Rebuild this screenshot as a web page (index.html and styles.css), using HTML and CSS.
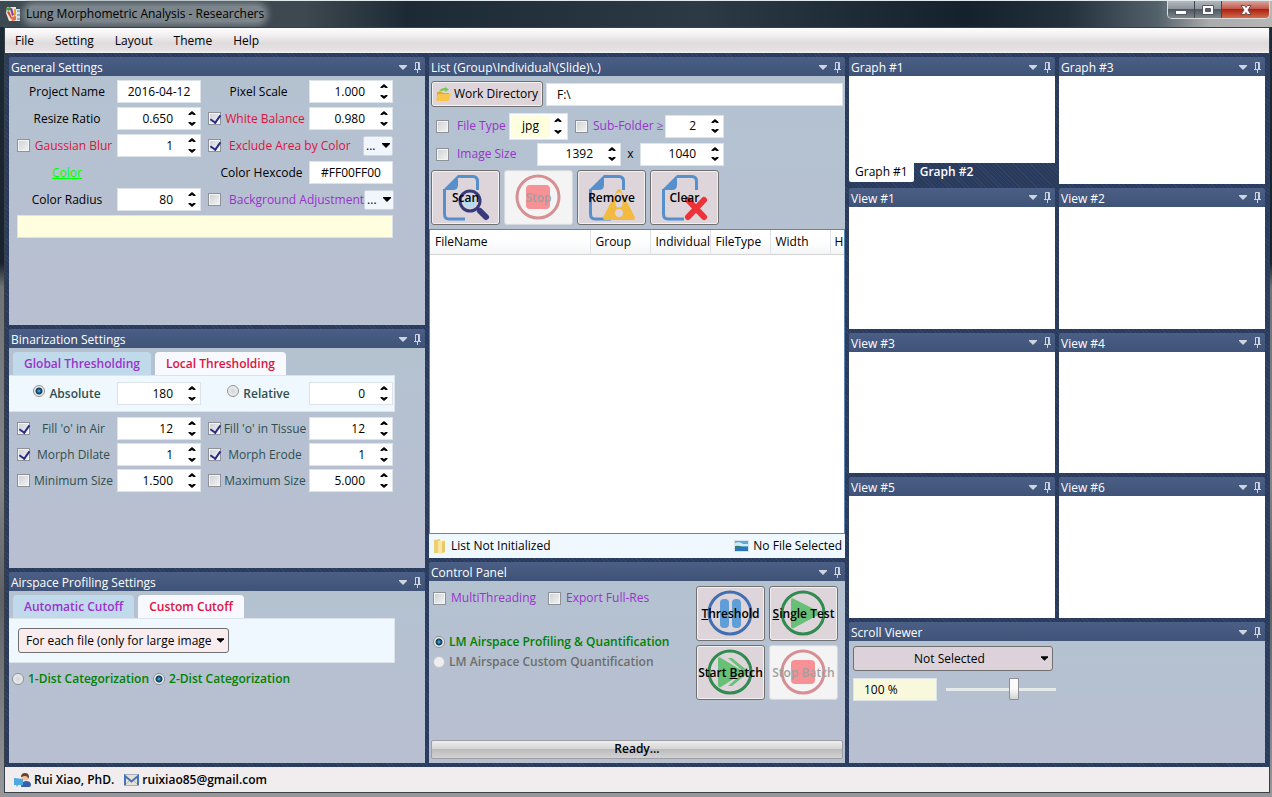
FILE: index.html
```
<!DOCTYPE html>
<html lang="en">
<head>
  <meta charset="UTF-8">
  <meta name="viewport" content="width=device-width, initial-scale=1.0">
  <title>Lung Morphometric Analysis - Researchers</title>
  <link rel="stylesheet" href="styles.css">
</head>
<body>
  <!-- shared icons -->
  <svg class="defs" width="0" height="0" aria-hidden="true">
    <symbol id="i-down" viewBox="0 0 8 5"><path d="M0 0h8v1L4 5 0 1z"/></symbol>
    <symbol id="i-up" viewBox="0 0 8 4"><path d="M4 0l3.500 3v1H5.500L4 3 2.500 4h-2V3z"/></symbol>
    <symbol id="i-dn" viewBox="0 0 8 4"><path d="M4 4L.5 1V0h2L4 1 5.500 0h2v1z"/></symbol>
    <symbol id="i-pin" viewBox="0 0 7 11"><path d="M1.500 7V.5h4V7M0 7.500h7M3.500 7.500V11M4.500 1v6" fill="none" stroke="currentColor"/></symbol>
    <symbol id="i-doc" viewBox="0 0 69 55">
      <path d="M27 6.500h15q4.500 0 4.500 5V20M13.500 19v25q0 5 4.500 5h16" fill="none" stroke="#5590cc" stroke-width="3"/>
      <path d="M27 5v10q0 5-5 5H12z" fill="#5590cc"/>
    </symbol>
    <symbol id="i-stop" viewBox="0 0 69 55">
      <circle cx="34" cy="27" r="21" fill="none" stroke="#d69093" stroke-width="3"/>
      <rect x="22" y="15" width="24" height="24" rx="4" fill="#f69196"/>
    </symbol>
  </svg>

  <header class="titlebar">
    <svg class="app-icon" width="15" height="14" viewBox="0 0 15 14">
      <path d="M1 0h9v2h4v12H3L0 6z" fill="#e9e6e4"/>
      <path d="M0 1l4-1 2 2-4 2z" fill="#4b9b3a"/>
      <path d="M4 2l2-1 2 7-2 1z" fill="#8d3ba5"/>
      <path d="M1 5l2-1 3 7-1 1z" fill="#d8432c"/>
      <path d="M8 2l2 0 0 6-2 1z" fill="#e5a323"/>
      <path d="M11 3h3v2h-3zM11 7h3v2h-3zM11 11h3v2h-3z" fill="#7bbcd6"/>
      <path d="M5 10l5-1 0 4-4 1z" fill="#e8703a"/>
    </svg>
    <h1>Lung Morphometric Analysis - Researchers</h1>
    <div class="window-buttons">
      <button aria-label="Minimize"><svg width="14" height="12"><rect x="1.500" y="6.500" width="11" height="4" fill="#fff" stroke="#555b66"/></svg></button>
      <button aria-label="Maximize"><svg width="14" height="12"><path d="M1.500 1.500h11v9h-11zM4.500 4.500v3h5v-3z" fill="#fff" fill-rule="evenodd" stroke="#555b66"/></svg></button>
      <button class="close" aria-label="Close"><svg width="14" height="12" viewBox="0 0 14 12"><path d="M2 1.500h3.500L7 3.500l1.500-2H12L9 6l3 4.500H8.500L7 8.500l-1.500 2H2L5 6z" fill="#fff" stroke="#6b4a4e"/></svg></button>
    </div>
  </header>

  <div class="window">
    <nav class="menu">
      <a href="#">File</a>
      <a href="#">Setting</a>
      <a href="#">Layout</a>
      <a href="#">Theme</a>
      <a href="#">Help</a>
    </nav>

    <main class="dock">
      <div class="column left">
        <section class="panel">
          <header class="panel-title"><h2>General Settings</h2><svg class="caret"><use href="#i-down"/></svg><svg class="pin"><use href="#i-pin"/></svg></header>
          <div class="panel-body">
            <div class="form">
              <label class="wide" for="project">Project Name</label>
              <input class="box center" id="project" type="text" value="2016-04-12">
              <label class="wide right" for="scale">Pixel Scale</label>
              <div class="spin"><input id="scale" type="text" value="1.000"><button aria-label="Up"><svg><use href="#i-up"/></svg></button><button aria-label="Down"><svg><use href="#i-dn"/></svg></button></div>

              <label class="wide" for="ratio">Resize Ratio</label>
              <div class="spin"><input id="ratio" type="text" value="0.650"><button aria-label="Up"><svg><use href="#i-up"/></svg></button><button aria-label="Down"><svg><use href="#i-dn"/></svg></button></div>
              <input class="right" type="checkbox" id="white" checked>
              <label class="red" for="white">White Balance</label>
              <div class="spin"><input aria-label="White Balance" type="text" value="0.980"><button aria-label="Up"><svg><use href="#i-up"/></svg></button><button aria-label="Down"><svg><use href="#i-dn"/></svg></button></div>

              <input type="checkbox" id="blur">
              <label class="red" for="blur">Gaussian Blur</label>
              <div class="spin"><input aria-label="Gaussian Blur" type="text" value="1"><button aria-label="Up"><svg><use href="#i-up"/></svg></button><button aria-label="Down"><svg><use href="#i-dn"/></svg></button></div>
              <input class="right" type="checkbox" id="exclude" checked>
              <div class="with-more"><label class="red" for="exclude">Exclude Area by Color</label><button class="more"><span>...</span><svg><use href="#i-down"/></svg></button></div>

              <a class="wide color-link" href="#">Color</a>
              <label class="wide right hex" for="hex">Color Hexcode</label>
              <input class="box center" id="hex" type="text" value="#FF00FF00">

              <label class="wide" for="radius">Color Radius</label>
              <div class="spin"><input id="radius" type="text" value="80"><button aria-label="Up"><svg><use href="#i-up"/></svg></button><button aria-label="Down"><svg><use href="#i-dn"/></svg></button></div>
              <input class="right" type="checkbox" id="backadj">
              <div class="with-more"><label class="purple" for="backadj">Background Adjustment</label><button class="more"><span>...</span><svg><use href="#i-down"/></svg></button></div>

              <input class="box note" type="text" aria-label="Note">
            </div>
          </div>
        </section>

        <section class="panel">
          <header class="panel-title"><h2>Binarization Settings</h2><svg class="caret"><use href="#i-down"/></svg><svg class="pin"><use href="#i-pin"/></svg></header>
          <div class="panel-body">
            <div class="tabs"><button class="tab active">Global Thresholding</button><button class="tab">Local Thresholding</button></div>
            <div class="tab-page">
              <div class="form">
                <div class="wide radio"><input type="radio" name="mode" id="absolute" checked><label for="absolute">Absolute</label></div>
                <div class="spin"><input aria-label="Absolute" type="text" value="180"><button aria-label="Up"><svg><use href="#i-up"/></svg></button><button aria-label="Down"><svg><use href="#i-dn"/></svg></button></div>
                <div class="wide right radio"><input type="radio" name="mode" id="relative"><label for="relative">Relative</label></div>
                <div class="spin"><input aria-label="Relative" type="text" value="0"><button aria-label="Up"><svg><use href="#i-up"/></svg></button><button aria-label="Down"><svg><use href="#i-dn"/></svg></button></div>
              </div>
            </div>
            <div class="form dense">
              <input type="checkbox" id="air" checked>
              <label for="air">Fill 'o' in Air</label>
              <div class="spin"><input aria-label="Fill in Air" type="text" value="12"><button aria-label="Up"><svg><use href="#i-up"/></svg></button><button aria-label="Down"><svg><use href="#i-dn"/></svg></button></div>
              <input class="right" type="checkbox" id="tissue" checked>
              <label for="tissue">Fill 'o' in Tissue</label>
              <div class="spin"><input aria-label="Fill in Tissue" type="text" value="12"><button aria-label="Up"><svg><use href="#i-up"/></svg></button><button aria-label="Down"><svg><use href="#i-dn"/></svg></button></div>

              <input type="checkbox" id="dilate" checked>
              <label for="dilate">Morph Dilate</label>
              <div class="spin"><input aria-label="Morph Dilate" type="text" value="1"><button aria-label="Up"><svg><use href="#i-up"/></svg></button><button aria-label="Down"><svg><use href="#i-dn"/></svg></button></div>
              <input class="right" type="checkbox" id="erode" checked>
              <label for="erode">Morph Erode</label>
              <div class="spin"><input aria-label="Morph Erode" type="text" value="1"><button aria-label="Up"><svg><use href="#i-up"/></svg></button><button aria-label="Down"><svg><use href="#i-dn"/></svg></button></div>

              <input type="checkbox" id="min">
              <label for="min">Minimum Size</label>
              <div class="spin"><input aria-label="Minimum Size" type="text" value="1.500"><button aria-label="Up"><svg><use href="#i-up"/></svg></button><button aria-label="Down"><svg><use href="#i-dn"/></svg></button></div>
              <input class="right" type="checkbox" id="max">
              <label for="max">Maximum Size</label>
              <div class="spin"><input aria-label="Maximum Size" type="text" value="5.000"><button aria-label="Up"><svg><use href="#i-up"/></svg></button><button aria-label="Down"><svg><use href="#i-dn"/></svg></button></div>
            </div>
          </div>
        </section>

        <section class="panel">
          <header class="panel-title"><h2>Airspace Profiling Settings</h2><svg class="caret"><use href="#i-down"/></svg><svg class="pin"><use href="#i-pin"/></svg></header>
          <div class="panel-body">
            <div class="tabs"><button class="tab active">Automatic Cutoff</button><button class="tab">Custom Cutoff</button></div>
            <div class="tab-page cutoff">
              <div class="combo"><select aria-label="Cutoff"><option>For each file (only for large image</option></select><svg><use href="#i-down"/></svg></div>
            </div>
            <div class="dist green">
              <input type="radio" name="dist" id="dist1"><label for="dist1">1-Dist Categorization</label>
              <input type="radio" name="dist" id="dist2" checked><label for="dist2">2-Dist Categorization</label>
            </div>
          </div>
        </section>
      </div>

      <div class="column middle">
        <section class="panel">
          <header class="panel-title"><h2>List (Group\Individual\(Slide)\.)</h2><svg class="caret"><use href="#i-down"/></svg><svg class="pin"><use href="#i-pin"/></svg></header>
          <div class="panel-body list-body">
            <div class="directory">
              <button class="btn work">
                <svg width="15" height="15" viewBox="0 0 15 15">
                  <path d="M1 5h5l1 1h6v7H1z" fill="#e8a62c"/>
                  <path d="M0 13l2-6h13l-2 6q0 1-1 1H1q-1 0-1-1z" fill="#f8c64c"/>
                  <path d="M3 5q1-4 6-4V0l4 2.500L9 5V3.500Q6 3 3 5z" fill="#79c94f"/>
                </svg>
                Work Directory
              </button>
              <input class="box" type="text" aria-label="Path" value="F:\">
            </div>
            <div class="filters">
              <input type="checkbox" id="ftype"><label class="purple ftype" for="ftype">File Type</label>
              <div class="spin type"><input aria-label="File Type" type="text" value="jpg"><button aria-label="Up"><svg><use href="#i-up"/></svg></button><button aria-label="Down"><svg><use href="#i-dn"/></svg></button></div>
              <input type="checkbox" id="sub" class="sub"><label class="purple" for="sub">Sub-Folder ≥</label>
              <div class="spin short"><input aria-label="Sub-Folder" type="text" value="2"><button aria-label="Up"><svg><use href="#i-up"/></svg></button><button aria-label="Down"><svg><use href="#i-dn"/></svg></button></div>
            </div>
            <div class="filters size">
              <input type="checkbox" id="isize"><label class="purple" for="isize">Image Size</label>
              <div class="spin"><input aria-label="Width" type="text" value="1392"><button aria-label="Up"><svg><use href="#i-up"/></svg></button><button aria-label="Down"><svg><use href="#i-dn"/></svg></button></div>
              <span class="times">x</span>
              <div class="spin"><input aria-label="Height" type="text" value="1040"><button aria-label="Up"><svg><use href="#i-up"/></svg></button><button aria-label="Down"><svg><use href="#i-dn"/></svg></button></div>
            </div>
            <div class="actions">
              <button class="btn big">
                <svg viewBox="0 0 69 55"><use href="#i-doc"/><circle cx="39" cy="31" r="10" fill="#ddd5dd" stroke="#383b7a" stroke-width="3"/><circle cx="39" cy="32" r="6" fill="#b5dcee"/><path d="M46 38l4 3" stroke="#383b7a" stroke-width="3"/><path d="M49 41l6 6" stroke="#383b7a" stroke-width="6" stroke-linecap="round"/></svg>
                <span>Scan</span>
              </button>
              <button class="btn big" disabled><svg viewBox="0 0 69 55"><use href="#i-stop"/></svg><span>Stop</span></button>
              <button class="btn big">
                <svg viewBox="0 0 69 55"><use href="#i-doc"/><path d="M42 21L56 48H28z" fill="#f3ba40" stroke="#f3ba40" stroke-width="4" stroke-linejoin="round"/><path d="M42 26v8" stroke="#ddd5da" stroke-width="7" stroke-linecap="round"/><circle cx="42" cy="43" r="4" fill="#ddd5da"/></svg>
                <span>Remove</span>
              </button>
              <button class="btn big">
                <svg viewBox="0 0 69 55"><use href="#i-doc"/><path d="M38 30l16 17M54 30L38 47" stroke="#ed3237" stroke-width="6" stroke-linecap="round"/></svg>
                <span>Clear</span>
              </button>
            </div>
            <div class="list">
              <table>
                <thead><tr><th class="name">FileName</th><th>Group</th><th>Individual</th><th>FileType</th><th>Width</th><th class="last">H</th></tr></thead>
              </table>
            </div>
            <div class="list-status">
              <svg width="14" height="15" viewBox="0 0 14 15"><path d="M1 1l6-1v14l-6 0z" fill="#eccf72"/><path d="M5 2l7-1v12l-5 2-2-1z" fill="#f9e6a0"/><path d="M9 3l3-1v11l-3 1z" fill="#e9c869"/></svg>
              <span>List Not Initialized</span>
              <svg class="picture" width="15" height="12" viewBox="0 0 15 12"><rect x="0.500" y="0.500" width="14" height="11" fill="#5ea9dc" stroke="#d8e2e8"/><path d="M1 3q5-2 8 1l5 0v2H1z" fill="#d3ecf8"/><path d="M1 6q4-1 7 1l6 0v1H1z" fill="#377f67"/><path d="M1 8h13v3H1z" fill="#2c76b8"/></svg>
              <span>No File Selected</span>
            </div>
          </div>
        </section>

        <section class="panel">
          <header class="panel-title"><h2>Control Panel</h2><svg class="caret"><use href="#i-down"/></svg><svg class="pin"><use href="#i-pin"/></svg></header>
          <div class="panel-body control">
            <div class="control-top">
              <div class="options">
                <div class="checks">
                  <input type="checkbox" id="multi"><label class="purple" for="multi">MultiThreading</label>
                  <input type="checkbox" id="full"><label class="purple" for="full">Export Full-Res</label>
                </div>
                <div class="lm green"><input type="radio" name="lm" id="lm1" checked><label for="lm1">LM Airspace Profiling &amp; Quantification</label></div>
                <div class="lm gray"><input type="radio" name="lm" id="lm2" disabled><label for="lm2">LM Airspace Custom Quantification</label></div>
              </div>
              <div class="run-grid">
                <button class="btn big">
                  <svg viewBox="0 0 69 55"><circle cx="34" cy="27" r="21" fill="none" stroke="#426fb0" stroke-width="3"/><rect x="24" y="13" width="9" height="29" rx="4" fill="#5f9ed6"/><rect x="36" y="13" width="9" height="29" rx="4" fill="#5f9ed6"/></svg>
                  <span><u>T</u>hreshold</span>
                </button>
                <button class="btn big">
                  <svg viewBox="0 0 69 55"><circle cx="34" cy="27" r="21" fill="none" stroke="#318a50" stroke-width="3"/><path d="M22 14q0-3 3-1l24 12q3 2 0 4L25 42q-3 1-3-2z" fill="#68c077"/></svg>
                  <span><u>S</u>ingle Test</span>
                </button>
                <button class="btn big">
                  <svg viewBox="0 0 69 55"><circle cx="34" cy="27" r="21" fill="none" stroke="#318a50" stroke-width="3"/><path d="M22 14q0-3 3-1l20 12q2 2 0 4L25 42q-3 1-3-2z" fill="#68c077"/><path d="M32 13h4l17 14-17 14h-4l16-14z" fill="#68c077"/></svg>
                  <span>Start <u>B</u>atch</span>
                </button>
                <button class="btn big" disabled><svg viewBox="0 0 69 55"><use href="#i-stop"/></svg><span>Stop Batch</span></button>
              </div>
            </div>
            <div class="progress" role="status">Ready...</div>
          </div>
        </section>
      </div>

      <div class="views">
        <section class="panel graph">
          <header class="panel-title"><h2>Graph #1</h2><svg class="caret"><use href="#i-down"/></svg><svg class="pin"><use href="#i-pin"/></svg></header>
          <div class="canvas"></div>
          <div class="graph-tabs"><button class="active">Graph #1</button><button>Graph #2</button></div>
        </section>
        <section class="panel"><header class="panel-title"><h2>Graph #3</h2><svg class="caret"><use href="#i-down"/></svg><svg class="pin"><use href="#i-pin"/></svg></header><div class="canvas"></div></section>
        <section class="panel"><header class="panel-title"><h2>View #1</h2><svg class="caret"><use href="#i-down"/></svg><svg class="pin"><use href="#i-pin"/></svg></header><div class="canvas"></div></section>
        <section class="panel"><header class="panel-title"><h2>View #2</h2><svg class="caret"><use href="#i-down"/></svg><svg class="pin"><use href="#i-pin"/></svg></header><div class="canvas"></div></section>
        <section class="panel"><header class="panel-title"><h2>View #3</h2><svg class="caret"><use href="#i-down"/></svg><svg class="pin"><use href="#i-pin"/></svg></header><div class="canvas"></div></section>
        <section class="panel"><header class="panel-title"><h2>View #4</h2><svg class="caret"><use href="#i-down"/></svg><svg class="pin"><use href="#i-pin"/></svg></header><div class="canvas"></div></section>
        <section class="panel"><header class="panel-title"><h2>View #5</h2><svg class="caret"><use href="#i-down"/></svg><svg class="pin"><use href="#i-pin"/></svg></header><div class="canvas"></div></section>
        <section class="panel"><header class="panel-title"><h2>View #6</h2><svg class="caret"><use href="#i-down"/></svg><svg class="pin"><use href="#i-pin"/></svg></header><div class="canvas"></div></section>
        <section class="panel scroll-viewer">
          <header class="panel-title"><h2>Scroll Viewer</h2><svg class="caret"><use href="#i-down"/></svg><svg class="pin"><use href="#i-pin"/></svg></header>
          <div class="panel-body viewer">
            <div class="combo selected"><select aria-label="View"><option>Not Selected</option></select><svg><use href="#i-down"/></svg></div>
            <div class="zoom">
              <input class="box percent" type="text" aria-label="Zoom" value="100 %">
              <input type="range" aria-label="Zoom level" min="0" max="100" value="63">
            </div>
          </div>
        </section>
      </div>
    </main>

    <footer class="status">
      <svg width="17" height="14" viewBox="0 0 17 14"><path d="M7 14q0-6 5-6t5 4q0 2-2 2z" fill="#3a5fa8"/><circle cx="11" cy="4" r="3.500" fill="#f0c49c"/><path d="M7 4q0-4 4-4t4 4l-1 2q0-3-3-3-2 0-3 1z" fill="#6b4430"/><path d="M0 5l9 1v6l-5 0-1 2-1-2H0z" fill="#49a9e0"/></svg>
      <span>Rui Xiao, PhD.</span>
      <svg class="mail" width="15" height="12" viewBox="0 0 15 12"><rect x="0.500" y="0.500" width="14" height="11" fill="#e4e2d8" stroke="#a9b0b8"/><path d="M1 11l5-5M14 11L9 6" stroke="#b9b9b2"/><path d="M1 11V2l6.500 5.500L14 2v9" fill="none" stroke="#4672b8" stroke-width="2"/></svg>
      <a href="mailto:ruixiao85@gmail.com">ruixiao85@gmail.com</a>
    </footer>
  </div>
</body>
</html>
```
FILE: styles.css
```
* {
  box-sizing: border-box;
}
body {
  margin: 0;
  height: 100vh;
  min-height: 760px;
  display: flex;
  flex-direction: column;
  font-family: "Segoe UI", "Open Sans", "Noto Sans", sans-serif;
  font-size: 12px;
  line-height: 16px;
  color: #000;
  background: linear-gradient(180deg, #1d2b38 0, #17232e 33%, #6f7377 36%, #84868a 60%, #5d6166 75%, #97989b 100%);
}
button, input, select {
  font: inherit;
  color: inherit;
  margin: 0;
}
button {
  padding: 0;
  border: none;
  background: none;
}
h1, h2 {
  margin: 0;
  font-size: 12px;
  font-weight: normal;
}
a {
  color: inherit;
  text-decoration: none;
}
svg {
  display: block;
  flex: none;
}
.defs {
  position: absolute;
}

/* title bar */
.titlebar {
  height: 27px;
  flex: none;
  display: flex;
  align-items: center;
  padding: 0 2px 0 6px;
  border-top: 1px solid #dfe9ec;
  background: linear-gradient(90deg, #3e4a52 0, #3d4850 24%, #1d2a35 32%, #2b3a45 55%, #15212d 76%, #22313c 84%, #53616b 91%, #a9abac 95%, #b6b6b6 100%);
}
.titlebar h1 {
  margin-left: 5px;
  padding: 0;
  background: #7c858b;
  border-radius: 8px;
  box-shadow: 0 0 6px 4px #7c858b;
}
.window-buttons {
  display: flex;
  align-self: flex-start;
  margin-left: auto;
  height: 18px;
  border: 1px solid #dcdcdc;
  border-top: none;
  border-radius: 0 0 5px 5px;
  overflow: hidden;
}
.window-buttons button {
  width: 27px;
  display: flex;
  align-items: center;
  justify-content: center;
  border-right: 1px solid #3f4750;
  background: linear-gradient(#b3b8bd 0, #8e959c 45%, #505962 50%, #7d858c 100%);
}
.window-buttons .close {
  width: 47px;
  border: none;
  background: linear-gradient(#d9a79f 0, #c4584a 45%, #a82411 50%, #d4694a 100%);
}

/* main window */
.window {
  flex: 1;
  min-height: 0;
  display: flex;
  flex-direction: column;
  margin: 0 2px 4px 4px;
  border: 1px solid #3a3f46;
}
.menu {
  height: 25px;
  flex: none;
  display: flex;
  align-items: center;
  gap: 21px;
  padding: 0 10px;
  background: linear-gradient(#fdfcfd 0, #f2eff0 30%, #dfdbdc 60%, #e6e2e3 90%, #f6f4f3 100%);
}
.dock {
  flex: 1;
  min-height: 0;
  display: grid;
  grid-template-columns: 1fr 1fr 1fr;
  gap: 4px;
  padding: 4px;
  background: repeating-linear-gradient(45deg, #293a5a 0, #293a5a 2px, #30446a 2px, #30446a 3px);
}
.column {
  display: grid;
  gap: 4px;
  min-width: 0;
  min-height: 0;
}
.left {
  grid-template-rows: 268fr 239fr 191fr;
}
.middle {
  grid-template-rows: 501fr 201fr;
}
.views {
  display: grid;
  gap: 4px;
  min-width: 0;
  grid-template-columns: 1fr 1fr;
  grid-template-rows: 127fr 141fr 141fr 141fr 141fr;
}
.panel {
  display: flex;
  flex-direction: column;
  min-width: 0;
  min-height: 0;
}
.panel-title {
  height: 19px;
  flex: none;
  display: flex;
  align-items: center;
  padding: 3px 4px 0 2px;
  color: #fff;
  border-radius: 2px 2px 0 0;
  background: linear-gradient(#4b5f86, #3f5378);
}
.panel-title h2 {
  flex: 1;
  font-weight: 500;
}
.caret {
  width: 8px;
  height: 5px;
  margin: 0 7px 2px 0;
  fill: #ced4df;
}
.pin {
  width: 7px;
  height: 11px;
  margin-bottom: 2px;
  color: #ced4df;
}
.panel-body {
  flex: 1;
  min-height: 0;
  background: linear-gradient(#b4c2d0, #b8bfd0);
}
.canvas {
  flex: 1;
  background: #fff;
}

/* form controls */
.box, .spin {
  width: 84px;
  height: 23px;
  background: #fff;
  border: 1px solid #dce3ea;
}
.center {
  text-align: center;
}
.spin {
  display: grid;
  grid-template-columns: 1fr 16px;
  grid-template-rows: 1fr 1fr;
}
.spin input {
  grid-row: 1 / 3;
  min-width: 0;
  width: 100%;
  padding: 0 11px 0 0;
  border: none;
  background: none;
  text-align: right;
}
.spin button {
  display: flex;
  align-items: center;
  justify-content: center;
}
.spin svg {
  width: 8px;
  height: 4px;
}
input[type="checkbox"] {
  appearance: none;
  width: 13px;
  height: 13px;
  flex: none;
  border: 1px solid #8e9298;
  background: linear-gradient(135deg, #cdd0d4, #f4f4f4);
  box-shadow: inset 0 0 0 1px #f4f4f4;
}
input[type="checkbox"]:checked::before {
  content: "";
  display: block;
  width: 5px;
  height: 8px;
  margin: 0 0 0 3px;
  border: solid #262a85;
  border-width: 0 2px 2px 0;
  transform: rotate(35deg);
}
input[type="radio"] {
  appearance: none;
  width: 12px;
  height: 12px;
  flex: none;
  border: 1px solid #8e9298;
  border-radius: 50%;
  background: radial-gradient(circle, #d4d6d8, #f6f6f6);
}
input[type="radio"]:checked {
  background: radial-gradient(circle, #4fc0e4 0, #145a86 2px, #16344f 3px, #f0f0f0 4px);
}
input[type="radio"]:disabled {
  border-color: #c3c5c9;
  background: #eee;
}
.form {
  display: grid;
  grid-template-columns: 13px 87px 84px 7px 13px 88px 84px;
  grid-auto-rows: 23px;
  row-gap: 4px;
  align-items: center;
  padding: 4px 0 0 8px;
}
.form label, .color-link {
  text-align: center;
  white-space: nowrap;
}
.wide {
  grid-column: 1 / 3;
}
.right {
  grid-column: 5;
}
.wide.right {
  grid-column: 5 / 7;
}
.wide.hex {
  padding-left: 6px;
}
.with-more {
  grid-column: 6 / 8;
  display: flex;
  align-items: center;
  justify-content: space-between;
  padding-left: 8px;
}
.more {
  width: 30px;
  height: 20px;
  flex: none;
  display: flex;
  align-items: center;
  justify-content: space-between;
  padding: 0 2px 0 2px;
  background: #f0f6fc;
  border: 1px solid #cdd5de;
  border-radius: 2px;
}
.more svg {
  width: 8px;
  height: 5px;
}
.red {
  color: #dc143c;
}
.purple {
  color: #9932cc;
}
.green {
  color: #008000;
  font-weight: 600;
}
.gray {
  color: #6d6d6d;
  font-weight: 600;
}
.color-link {
  color: #00ff00;
  text-decoration: underline;
}
.note {
  grid-column: 1 / 8;
  width: 100%;
  background: #ffffe0;
}
.tabs {
  display: flex;
  gap: 4px;
  padding: 4px 0 0 4px;
}
.tab {
  height: 23px;
  padding: 0 11px;
  font-weight: 600;
  color: #dc143c;
  background: #f8f8ff;
  border-radius: 4px 4px 0 0;
}
.tab.active {
  color: #9932cc;
  background: #c0daec;
}
.tab-page {
  width: 386px;
  padding: 2px 0 6px;
  background: #f0f8ff;
  border: 1px solid #dde3e8;
  border-left: none;
}
.radio {
  display: flex;
  justify-content: center;
  gap: 4px;
  font-weight: 600;
  color: #2f4f4f;
}
.radio input {
  margin-bottom: 4px;
}
.radio label {
  margin-top: 1px;
}
.dense {
  row-gap: 3px;
  padding-top: 5px;
  color: #2f4f4f;
}
.spin input {
  color: #000;
}
.cutoff {
  padding: 9px;
}
.combo {
  display: grid;
  width: 211px;
  align-items: center;
}
.combo select {
  grid-area: 1 / 1;
  appearance: none;
  width: 100%;
  height: 25px;
  padding: 0 14px 0 7px;
  border: 1px solid #707070;
  border-radius: 3px;
  background: #f8ecee;
  text-overflow: clip;
}
.combo svg {
  grid-area: 1 / 1;
  justify-self: end;
  width: 7px;
  height: 5px;
  margin-right: 5px;
  pointer-events: none;
}
.dist {
  display: flex;
  align-items: center;
  gap: 4px;
  padding: 8px 0 0 3px;
}

/* file list */
.list-body {
  display: flex;
  flex-direction: column;
}
.directory {
  display: flex;
  align-items: center;
  gap: 3px;
  padding: 5px 2px;
}
.directory .box {
  flex: 1;
  min-width: 0;
  padding: 0 10px;
}
.btn {
  border: 1px solid #707070;
  border-radius: 3px;
  background: #ddd5da;
  box-shadow: inset 0 0 0 1px #f3f0f2;
}
.btn:disabled {
  color: #a0a0a0;
  border-color: #d5d9de;
  background: #f4f4f4;
}
.work {
  width: 112px;
  height: 26px;
  display: flex;
  align-items: center;
  justify-content: center;
  gap: 3px;
  font-weight: 500;
  white-space: nowrap;
}
.filters {
  display: flex;
  align-items: center;
  height: 28px;
  padding-left: 7px;
  white-space: nowrap;
}
.filters label {
  margin-left: 8px;
}
.filters .ftype {
  width: 52px;
}
.filters .type {
  width: 59px;
  height: 27px;
  padding: 1px;
}
.type input {
  padding: 0;
  text-align: center;
  background: #ffffe0;
}
.filters .sub {
  margin-left: 7px;
}
.filters .sub + label {
  margin-left: 5px;
  width: 72px;
}
.filters .short {
  width: 59px;
}
.size label {
  width: 80px;
}
.times {
  width: 19px;
  text-align: center;
}
.actions {
  display: flex;
  gap: 4px;
  padding: 2px 2px 4px;
}
.big {
  width: 69px;
  height: 55px;
  display: grid;
  place-items: center;
  font-weight: 600;
}
.big svg {
  grid-area: 1 / 1;
  width: 69px;
  height: 55px;
  margin: -1px;
}
.big span {
  grid-area: 1 / 1;
  white-space: nowrap;
}
.list {
  flex: 1;
  min-height: 0;
  overflow: hidden;
  background: #fff;
  border: 1px solid #5c87b2;
}
.list table {
  width: 100%;
  table-layout: fixed;
  border-collapse: collapse;
}
.list th {
  width: 60px;
  height: 24px;
  padding: 0 0 0 5px;
  text-align: left;
  font-weight: normal;
  border-right: 1px solid #dfe3e8;
  border-bottom: 1px solid #d5d5d5;
  background: linear-gradient(#fff 40%, #f4f5f7);
}
.list .name {
  width: 160px;
}
.list .last {
  width: auto;
  padding-left: 4px;
  border-right: none;
}
.list-status {
  height: 24px;
  flex: none;
  display: flex;
  align-items: center;
  gap: 4px;
  padding: 0 3px 0 4px;
  background: #f0f8ff;
}
.picture {
  margin-left: auto;
}

/* control panel */
.control {
  display: flex;
  flex-direction: column;
  justify-content: space-between;
}
.control-top {
  display: flex;
  justify-content: space-between;
  padding: 5px 7px 0 4px;
}
.checks {
  display: flex;
  align-items: center;
  gap: 5px;
  margin: 4px 0 26px;
}
.checks label {
  margin-right: 7px;
}
.lm {
  display: flex;
  align-items: center;
  gap: 4px;
  height: 20px;
}
.run-grid {
  display: grid;
  grid-template-columns: 69px 69px;
  gap: 4px;
}
.progress {
  height: 19px;
  margin: 0 2px 4px;
  text-align: center;
  font-weight: 600;
  border: 1px solid #9c9fa3;
  border-radius: 2px;
  background: linear-gradient(#eee 0, #d6d6d6 45%, #bcbcbc 50%, #d2d2d2 100%);
}

/* graph tabs and viewer */
.graph-tabs {
  display: flex;
  height: 21px;
  flex: none;
  padding-bottom: 2px;
}
.graph-tabs button {
  padding: 0 6px;
  color: #fff;
  font-weight: 600;
}
.graph-tabs .active {
  color: #000;
  font-weight: normal;
  background: #fff;
  border-radius: 0 0 2px 2px;
}
.scroll-viewer {
  grid-column: 1 / 3;
}
.viewer {
  padding: 5px 4px;
}
.selected {
  width: 200px;
}
.selected select {
  text-align-last: center;
  background: #ddd2d9;
}
.zoom {
  display: flex;
  align-items: center;
  gap: 9px;
  margin-top: 7px;
}
.percent {
  padding: 0 10px;
  background: #f8f8dc;
}
input[type="range"] {
  appearance: none;
  width: 110px;
  height: 23px;
  background: none;
}
input[type="range"]::-webkit-slider-runnable-track {
  height: 3px;
  background: #e7eaea;
}
input[type="range"]::-webkit-slider-thumb {
  appearance: none;
  width: 10px;
  height: 22px;
  margin-top: -10px;
  border: 1px solid #8b8f94;
  border-radius: 1px;
  background: linear-gradient(#fafafa 50%, #d4d4d4);
}

.status {
  height: 25px;
  flex: none;
  display: flex;
  align-items: center;
  gap: 3px;
  padding-left: 9px;
  font-weight: 600;
  background: #f1edee;
}
.mail {
  margin-left: 7px;
}
```
